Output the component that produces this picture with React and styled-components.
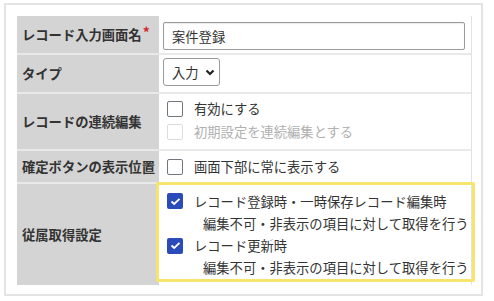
import React from 'react'
import styled, { createGlobalStyle } from 'styled-components'

const GlobalStyle = createGlobalStyle`
body {
  margin: 0;
  background: #ffffff;
  font-family: "Noto Sans CJK JP", "Noto Sans", sans-serif;
  color: #333333;
}
`

const Card = styled.div`
  width: 479px;
  margin: 3px 0 0 4px;
  padding: 11px 9px 9px 11px;
  border: 2px solid #e4e4e4;
  box-sizing: border-box;
  background: #ffffff;
`

const Table = styled.div`
  display: flex;
  flex-direction: column;
  border-right: 1px solid #e2e2e2;
`

const Row = styled.div`
  display: grid;
  grid-template-columns: 142px 1fr;
  height: ${p => p.h}px;
  border-bottom: ${p => (p.last ? 'none' : '2px solid #e9e9e9')};
`

const Label = styled.div`
  background: #d4d4d4;
  display: flex;
  align-items: center;
  padding-left: 5px;
  font-size: 13.3px;
  font-weight: bold;
  color: #333333;
  white-space: nowrap;
`

const Required = styled.span`
  color: #d6262b;
  font-size: 14px;
  margin-left: 1px;
  position: relative;
  top: -3px;
`

const Value = styled.div`
  display: flex;
  flex-direction: column;
  padding: ${p => p.pad || '0 0 0 8px'};
  box-sizing: border-box;
`

const Highlight = styled.div`
  margin: -2px -4px 3px -3px;
  border: 3px solid #f6e46c;
  border-radius: 2px;
  padding: 5px 0 0 8px;
  display: flex;
  flex-direction: column;
  height: 100px;
  box-sizing: border-box;
`

const TextInput = styled.div`
  height: 28px;
  border: 1px solid #9a9a9a;
  border-radius: 2px;
  box-sizing: border-box;
  display: flex;
  align-items: center;
  padding-left: 8px;
  font-size: 13.3px;
  color: #333333;
  box-shadow: inset 0 1px 1px rgba(0, 0, 0, 0.08);
`

const Select = styled.div`
  width: 57px;
  height: 28px;
  border: 1px solid #9a9a9a;
  border-radius: 3px;
  box-sizing: border-box;
  display: flex;
  align-items: center;
  gap: 6px;
  padding-left: 8px;
  font-size: 13.3px;
  color: #333333;
`

const CheckLine = styled.div`
  display: flex;
  align-items: center;
  height: 23px;
  font-size: 13.3px;
  color: ${p => (p.disabled ? '#b0b0b0' : '#333333')};
  white-space: nowrap;
`

const Box = styled.span`
  width: 16px;
  height: 16px;
  box-sizing: border-box;
  border-radius: 2px;
  margin-right: 11px;
  flex-shrink: 0;
  display: flex;
  align-items: center;
  justify-content: center;
  border: ${p =>
    p.checked ? 'none' : p.disabled ? '1.5px solid #dcdcdc' : '1.5px solid #6f7680'};
  background: ${p => (p.checked ? '#2b4bb8' : '#ffffff')};
`

const SubLine = styled.div`
  height: 23px;
  display: flex;
  align-items: center;
  padding-left: 36px;
  font-size: 13.3px;
  color: #333333;
  white-space: nowrap;
`

const Chevron = () => (
  <svg width="10" height="7" viewBox="0 0 10 7">
    <path d="M1.5 1.5 L5 5 L8.5 1.5" fill="none" stroke="#222" strokeWidth="2.2" />
  </svg>
)

const Check = () => (
  <svg width="11" height="9" viewBox="0 0 11 9">
    <path d="M1.5 4.5 L4.2 7 L9.5 1.8" fill="none" stroke="#fff" strokeWidth="1.8" />
  </svg>
)

const Checkbox = ({ checked, disabled, children }) => (
  <CheckLine disabled={disabled}>
    <Box checked={checked} disabled={disabled}>{checked && <Check />}</Box>
    {children}
  </CheckLine>
)

const App = () => {
  return (
    <>
      <GlobalStyle />
      <Card>
        <Table>
          <Row h={37}>
            <Label>レコード入力画面名<Required>*</Required></Label>
            <Value pad="6px 6px 0 4px">
              <TextInput>案件登録</TextInput>
            </Value>
          </Row>
          <Row h={37}>
            <Label>タイプ</Label>
            <Value pad="3px 0 0 4px">
              <Select>入力<Chevron /></Select>
            </Value>
          </Row>
          <Row h={55}>
            <Label>レコードの連続編集</Label>
            <Value pad="3px 0 0 8px">
              <Checkbox>有効にする</Checkbox>
              <Checkbox disabled>初期設定を連続編集とする</Checkbox>
            </Value>
          </Row>
          <Row h={31}>
            <Label>確定ボタンの表示位置</Label>
            <Value pad="4px 0 0 8px">
              <Checkbox>画面下部に常に表示する</Checkbox>
            </Value>
          </Row>
          <Row h={101} last>
            <Label>従属取得設定</Label>
            <Value pad="0">
              <Highlight>
                <Checkbox checked>レコード登録時・一時保存レコード編集時</Checkbox>
                <SubLine>編集不可・非表示の項目に対して取得を行う</SubLine>
                <Checkbox checked>レコード更新時</Checkbox>
                <SubLine>編集不可・非表示の項目に対して取得を行う</SubLine>
              </Highlight>
            </Value>
          </Row>
        </Table>
      </Card>
    </>
  )
}

export default App
